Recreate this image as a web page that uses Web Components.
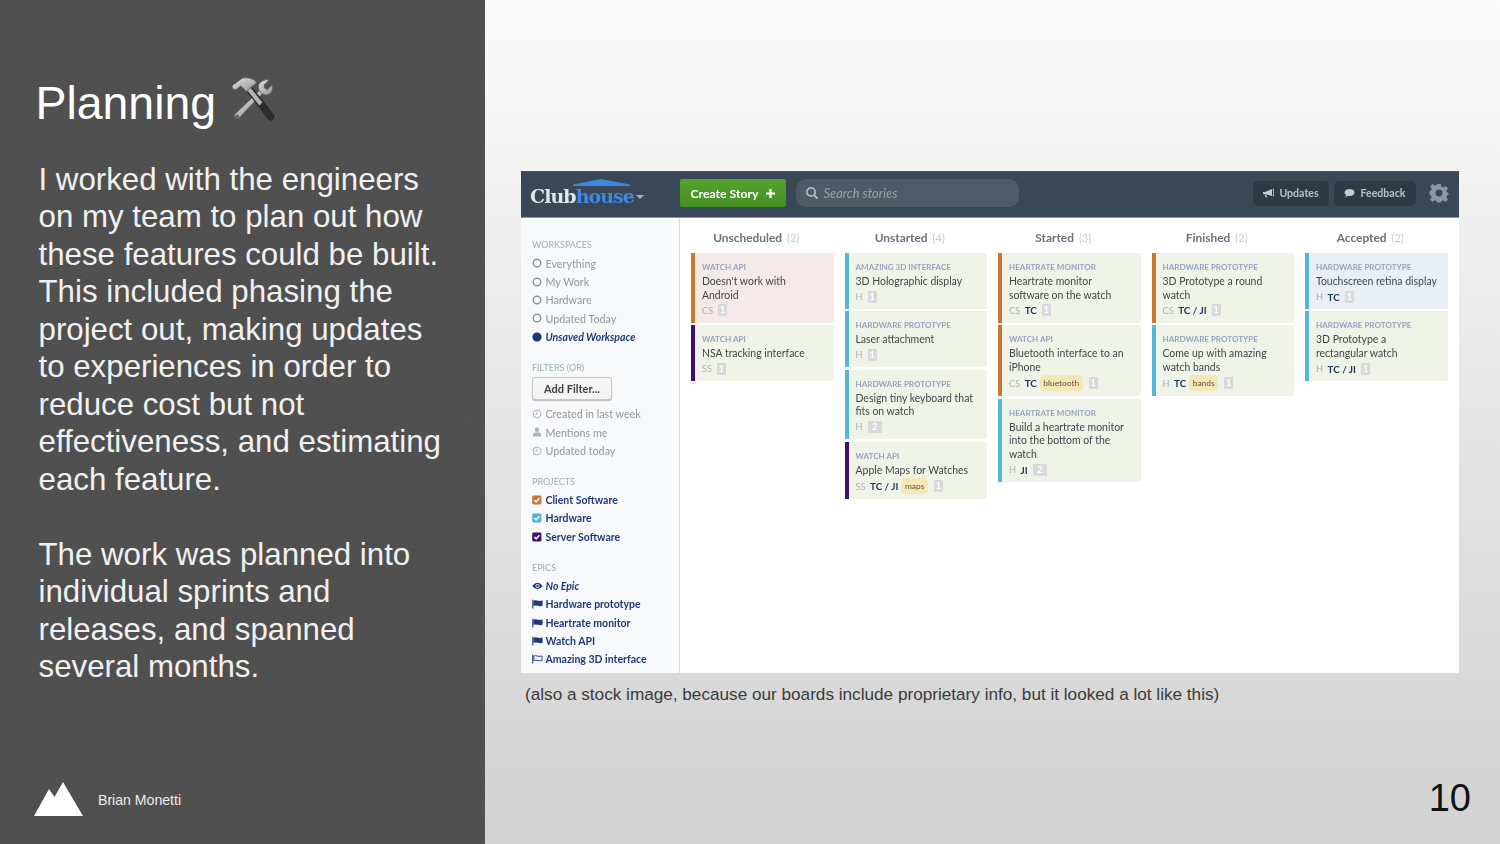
<!DOCTYPE html>
<html><head><meta charset="utf-8"><title>Planning</title>
<style>
html,body{margin:0;padding:0;width:1500px;height:844px;overflow:hidden}
</style></head><body>
<slide-page>
  <slide-aside slot="aside">
    <span slot="title">Planning</span>
    I worked with the engineers<br>on my team to plan out how<br>these features could be built.<br>This included phasing the<br>project out, making updates<br>to experiences in order to<br>reduce cost but not<br>effectiveness, and estimating<br>each feature.<br><br>The work was planned into<br>individual sprints and<br>releases, and spanned<br>several months.
    <span slot="author">Brian Monetti</span>
  </slide-aside>
  <app-window slot="main">
    <app-header slot="header"></app-header>
    <app-sidebar slot="sidebar"></app-sidebar>
    <kanban-col name="Unscheduled" count="2">
      <story-card tone="pink" bar="o" epic="Watch API" team="CS" est="1">Doesn't work with<br>Android</story-card>
      <story-card bar="p" epic="Watch API" team="SS" est="1">NSA tracking interface</story-card>
    </kanban-col>
    <kanban-col name="Unstarted" count="4">
      <story-card bar="b" epic="Amazing 3D interface" team="H" est="1">3D Holographic display</story-card>
      <story-card bar="b" epic="Hardware prototype" team="H" est="1">Laser attachment</story-card>
      <story-card bar="b" epic="Hardware prototype" team="H" est="2">Design tiny keyboard that<br>fits on watch</story-card>
      <story-card bar="p" epic="Watch API" team="SS" who="TC / JI" tag="maps" est="1">Apple Maps for Watches</story-card>
    </kanban-col>
    <kanban-col name="Started" count="3">
      <story-card bar="o" epic="Heartrate monitor" team="CS" who="TC" est="1">Heartrate monitor<br>software on the watch</story-card>
      <story-card bar="o" epic="Watch API" team="CS" who="TC" tag="bluetooth" est="1">Bluetooth interface to an<br>iPhone</story-card>
      <story-card bar="b" epic="Heartrate monitor" team="H" who="JI" est="2">Build a heartrate monitor<br>into the bottom of the<br>watch</story-card>
    </kanban-col>
    <kanban-col name="Finished" count="2">
      <story-card bar="o" epic="Hardware prototype" team="CS" who="TC / JI" est="1">3D Prototype a round<br>watch</story-card>
      <story-card bar="b" epic="Hardware prototype" team="H" who="TC" tag="bands" est="1">Come up with amazing<br>watch bands</story-card>
    </kanban-col>
    <kanban-col name="Accepted" count="2">
      <story-card tone="blue" bar="b" epic="Hardware prototype" team="H" who="TC" est="1">Touchscreen retina display</story-card>
      <story-card bar="b" epic="Hardware prototype" team="H" who="TC / JI" est="1">3D Prototype a<br>rectangular watch</story-card>
    </kanban-col>
  </app-window>
  <span slot="caption">(also a stock image, because our boards include proprietary info, but it looked a lot like this)</span>
  <span slot="page">10</span>
</slide-page>
<script>
function def(name, html, extra){
  customElements.define(name, class extends HTMLElement{
    constructor(){super();this.attachShadow({mode:'open'});}
    connectedCallback(){ this.shadowRoot.innerHTML = typeof html==='function'?html(this):html; if(extra)extra(this); }
  });
}
const I={
 ring:'<svg width="10" height="10" viewBox="0 0 10 10"><circle cx="5" cy="5" r="3.8" fill="none" stroke="#8f9396" stroke-width="1.4"/></svg>',
 dot:'<svg width="10" height="10" viewBox="0 0 10 10"><circle cx="5" cy="5" r="4.6" fill="#1b3581"/></svg>',
 clock:'<svg width="10" height="10" viewBox="0 0 10 10"><circle cx="5" cy="5" r="3.9" fill="none" stroke="#b0b3b6" stroke-width="1"/><path d="M5 2.8V5.3H3.2" fill="none" stroke="#b0b3b6" stroke-width="1"/></svg>',
 user:'<svg width="10" height="10" viewBox="0 0 10 10"><circle cx="5" cy="2.8" r="2.2" fill="#b0b3b6"/><path d="M1 9.5V7.4Q1 5.6 3 5.4H7Q9 5.6 9 7.4V9.5Z" fill="#b0b3b6"/></svg>',
 check:c=>`<svg width="10" height="10" viewBox="0 0 10 10"><rect x=".2" y=".6" width="9.2" height="8.8" rx="1.4" fill="${c}"/><path d="M2.4 5 4.2 6.8 7.4 3.2" fill="none" stroke="#fff" stroke-width="1.5"/></svg>`,
 eye:'<svg width="11" height="10" viewBox="0 0 11 10"><path d="M.3 5Q2.8 1.7 5.5 1.7T10.7 5Q8.2 8.3 5.5 8.3T.3 5Z" fill="#1f3a7a"/><circle cx="5.5" cy="5" r="2" fill="#f8f9fb"/><circle cx="5.5" cy="5" r="1.2" fill="#1f3a7a"/></svg>',
 flag:'<svg width="11" height="10" viewBox="0 0 11 10"><path d="M.8 .8V9.6" stroke="#1f3a7a" stroke-width="1.1"/><path d="M1.4 1.6Q3.2 .8 5 1.6T10.6 1.6V6.8Q8.2 7.6 6 6.8T1.4 6.8Z" fill="#1f3a7a"/></svg>',
 flagO:'<svg width="11" height="10" viewBox="0 0 11 10"><path d="M.8 .8V9.6" stroke="#1f3a7a" stroke-width="1.1"/><path d="M1.8 2Q3.4 1.3 5 2T10.1 2V6.5Q8 7.2 6 6.5T1.8 6.5Z" fill="none" stroke="#1f3a7a" stroke-width=".9"/></svg>'
};

def('slide-page',`<style>
:host{display:flex;width:1500px;height:844px;font-family:"Liberation Sans",Arial,sans-serif}
.l{width:485px;flex:none;display:flex}
.r{flex:1;display:flex;flex-direction:column;padding:171px 41px 0 36px;background:linear-gradient(180deg,#fbfbfb 0,#f0f0f0 25%,#dcdcdc 72%,#d2d2d2 100%);min-width:0}
.cap{font-size:17.16px;line-height:20px;color:#3a3a3a;padding:11px 0 0 4px;height:20px;white-space:nowrap}
.pg{margin-top:auto;text-align:right;font-size:38px;line-height:48px;color:#111;padding:0 0 22px 0;margin-right:-12px}
</style><div class="l"><slot name="aside"></slot></div><div class="r"><slot name="main"></slot><div class="cap"><slot name="caption"></slot></div><div class="pg"><slot name="page"></slot></div></div>`);

def('slide-aside',`<style>
:host{display:flex;flex-direction:column;width:485px;height:844px;box-sizing:border-box;background:#4c4c4c;color:#f4f4f4;position:relative;overflow:hidden}
.noise{position:absolute;inset:0;width:100%;height:100%;opacity:.07;pointer-events:none}
.t{position:relative;display:flex;align-items:center;gap:14px;font-size:46.4px;line-height:56px;color:#fff;padding:75px 0 0 35.5px}
.t svg{margin-top:-7px;flex:none}
.b{position:relative;font-size:31.25px;line-height:37.5px;padding:29.5px 0 0 38.5px;white-space:nowrap;color:#f1f1f1}
.f{position:relative;margin-top:auto;display:flex;align-items:center;gap:15px;padding:0 0 27px 34px;font-size:14.1px;color:#ececec}
</style>
<svg class="noise" aria-hidden="true"><filter id="n"><feTurbulence type="fractalNoise" baseFrequency="1.1 .5" numOctaves="2"/><feColorMatrix type="saturate" values="0"/></filter><rect width="100%" height="100%" filter="url(#n)"/></svg>
<div class="t"><slot name="title"></slot>
<svg width="47" height="47" viewBox="0 0 48 48"><defs><linearGradient id="s" x1="0" y1="0" x2="1" y2="1"><stop offset="0" stop-color="#e6e6e6"/><stop offset="1" stop-color="#8f8f8f"/></linearGradient></defs>
<path d="M5 39 31 14 34 17 9 43A3 3 0 0 1 5 39Z" fill="url(#s)" stroke="#5c5c5c" stroke-width=".8"/><circle cx="7.4" cy="41" r="1.7" fill="#555"/>
<path d="M30 15Q27 8 33 5 37 3 40 4L35 9 35 12 38 14 43 9Q45 14 41 18 37 21 33 18Z" fill="url(#s)" stroke="#5a5a5a" stroke-width=".8"/>
<path d="M17 15 22 11 45 40Q46 43 43 45 40 46 39 44Z" fill="#2c2c2c" stroke="#222" stroke-width=".6"/><path d="M18 15 21 12 33 27 30 30Z" fill="#b5b5b5"/>
<path d="M3 13 2 10 13 2Q19 1 25 4L27 7 22 11 17 16 11 10 6 14Z" fill="url(#s)" stroke="#666" stroke-width=".8"/>
</svg></div>
<div class="b"><slot></slot></div>
<div class="f"><svg width="49" height="35" viewBox="0 0 49 35"><path d="M0 34 15 7 20.5 15 29 0 49 34Z" fill="#fff"/></svg><slot name="author"></slot></div>`);

def('app-window',`<style>
:host{display:grid;grid-template-columns:159px 1fr;grid-template-rows:47px 1fr;width:938px;height:502px;background:#fff;font-family:Lato,"Liberation Sans",sans-serif;filter:blur(.4px);flex:none}
.h{grid-column:1/3}
.s{min-width:0}
.board{display:grid;grid-template-columns:repeat(5,142.5px);column-gap:11px;padding:0 0 0 11px;align-items:start}
</style><div class="h"><slot name="header"></slot></div><div class="s"><slot name="sidebar"></slot></div><div class="board"><slot></slot></div>`);

def('app-header',`<style>
:host{display:flex;align-items:center;height:47px;box-sizing:border-box;background:#3a4757;border-bottom:1px solid #8e98a4;border-top:1px solid #4a5563;font-family:Lato,sans-serif;padding:0 10px 3px 9px}
.logo{position:relative;width:100px;font-family:"DejaVu Serif",serif;font-weight:700;font-size:19px;letter-spacing:-.95px;line-height:22px;color:#dfe6ee;white-space:nowrap;margin-top:6px}
.logo b{color:#3c87e0}
.logo svg{position:absolute;left:43px;top:-6px}
.caret{margin:8px 0 0 6px;width:0;height:0;border:4px solid transparent;border-top:4px solid #a9b2bc;border-bottom:0}
.create{margin-left:36px;width:106px;height:28px;box-sizing:border-box;border-radius:2px;background:linear-gradient(#55a32f,#448f24);color:#fff;font-weight:700;font-size:12.2px;display:flex;align-items:center;justify-content:center;gap:8px}
.search{margin-left:10px;width:223px;height:28px;border-radius:10px;background:#4f5a69;display:flex;align-items:center;gap:4.5px;padding-left:9px;box-sizing:border-box;color:#98a1ac;font-style:italic;font-size:12.85px}
.sp{flex:1}
.pill{height:25px;border-radius:5px;background:#2e3946;color:#b8c0c9;font-size:10.6px;font-weight:700;display:flex;align-items:center;gap:5px;box-sizing:border-box;justify-content:center}
</style>
<div class="logo">Club<b>house</b><svg width="57" height="7" viewBox="0 0 57 7"><path d="M0 5.5 28 0 57 5.5V7H0Z" fill="#3c87e0"/></svg></div><div class="caret"></div>
<div class="create"><span>Create Story</span><svg width="9" height="9" viewBox="0 0 9 9"><path d="M4.5 0V9M0 4.5H9" stroke="#fff" stroke-width="2.2"/></svg></div>
<div class="search"><svg width="14" height="14" viewBox="0 0 14 14"><circle cx="6" cy="6" r="4.2" fill="none" stroke="#b5bcc5" stroke-width="1.7"/><path d="M9 9 12.6 12.6" stroke="#b5bcc5" stroke-width="2"/></svg><span>Search stories</span></div>
<div class="sp"></div>
<div class="pill" style="width:76px"><svg width="11" height="10" viewBox="0 0 11 10"><path d="M0 4H2L9 1V8L2 6H0Z M3 6.5 4.4 9.4H2.8L1.6 6.4Z" fill="#c4cbd3"/><path d="M9.5 1.5 10.5 1V8L9.5 7.5" fill="none" stroke="#c4cbd3" stroke-width=".8"/></svg><span>Updates</span></div>
<div class="pill" style="width:82px;margin-left:5px"><svg width="11" height="10" viewBox="0 0 11 10"><path d="M5.5 1C8.5 1 10.5 2.6 10.5 4.6S8.5 8 5.5 8Q4.7 8 4 7.8L1.3 9.4 2.2 7.1Q.5 6.2.5 4.6C.5 2.6 2.5 1 5.5 1Z" fill="#c4cbd3"/></svg><span>Feedback</span></div>
<svg style="margin:0 0 0 13px" width="20" height="20" viewBox="0 0 22 22"><path fill="#8d97a3" fill-rule="evenodd" d="M9 1H13L13.6 4 15.8 4.9 18.3 3.2 21 5.9 19.1 8.4 20 10.5 21.5 11 21.5 13 20 13.6 19 15.7 20.8 18.2 18.2 20.8 15.7 19 13.6 20 13 21.5H9L8.4 19.9 6.3 19 3.8 20.8 1.2 18.2 3 15.7 2 13.6.5 13V9L2 8.4 3 6.3 1.2 3.8 3.8 1.2 6.3 3 8.4 2.1ZM11 7.2A3.8 3.8 0 1 0 11 14.8 3.8 3.8 0 1 0 11 7.2Z"/></svg>`);

def('side-group', h=>`<style>
:host{display:block;margin-bottom:16px}
.l{font-size:9px;line-height:12px;color:#9db0ae;text-transform:uppercase;margin-bottom:3px}
</style><div class="l">${h.getAttribute('label')}</div><slot></slot>`);

def('side-item', h=>{
  const ic=h.getAttribute('i');
  const icon=ic.startsWith('#')?I.check(ic):I[ic];
  return `<style>
:host{display:flex;align-items:center;height:18.35px;gap:3.5px;font-size:10.5px;white-space:nowrap;color:#1f3a7a;font-weight:700}
:host([m]){color:#9a9d9f;font-weight:500;font-size:10.7px}
:host([em]){font-style:italic}
span{display:flex;width:10px;flex:none}
svg{flex:none}
</style><span>${icon}</span><slot></slot>`;
});

def('app-sidebar',`<style>
:host{display:block;height:455px;box-sizing:border-box;background:#f8f9fb;border-right:1px solid #dadcdf;padding:21px 0 0 11px;overflow:hidden}
.btn{width:80px;height:23px;box-sizing:border-box;border:1px solid #c4c6c8;border-radius:3px;background:#f5f5f5;box-shadow:0 1px 1px #bbb;color:#3e4348;font-size:11px;font-weight:700;display:flex;align-items:center;justify-content:center;margin:3px 0 5px}
</style>
<side-group label="Workspaces"><side-item m i="ring">Everything</side-item><side-item m i="ring">My Work</side-item><side-item m i="ring">Hardware</side-item><side-item m i="ring">Updated Today</side-item><side-item em i="dot">Unsaved Workspace</side-item></side-group>
<side-group label="Filters (OR)"><div class="btn">Add Filter...</div><side-item m i="clock">Created in last week</side-item><side-item m i="user">Mentions me</side-item><side-item m i="clock">Updated today</side-item></side-group>
<side-group label="Projects"><side-item i="#c9762f">Client Software</side-item><side-item i="#4fb0d8">Hardware</side-item><side-item i="#3c0f73">Server Software</side-item></side-group>
<side-group label="Epics"><side-item em i="eye">No Epic</side-item><side-item i="flag">Hardware prototype</side-item><side-item i="flag">Heartrate monitor</side-item><side-item i="flag">Watch API</side-item><side-item i="flagO">Amazing 3D interface</side-item></side-group>`);

def('kanban-col', h=>`<style>
:host{display:block}
.h{height:35px;display:flex;align-items:center;justify-content:center;gap:5px;font-size:11.9px;font-weight:700;color:#6d7276;padding:3px 12px 0 0;box-sizing:border-box}
.h i{font-style:normal;font-weight:400;color:#c9cbcd;font-size:11px}
.c{display:flex;flex-direction:column;gap:2.3px}
</style><div class="h"><span>${h.getAttribute('name')}</span><i>(${h.getAttribute('count')})</i></div><div class="c"><slot></slot></div>`);

def('story-card', h=>{
  const a=k=>h.getAttribute(k);
  const bars={o:'#c9762f',p:'#3f0f75',b:'#56b5da'};
  const bg={pink:'#f6e9e9',blue:'#e9eff4'}[a('tone')]||'#f0f4e8';
  return `<style>
:host{display:block;box-sizing:border-box;background:${bg};border-left:4px solid ${bars[a('bar')]};padding:8px 6px 5.3px 7px}
.e{font-size:8.05px;line-height:12.6px;color:#98a3c2;font-weight:700;text-transform:uppercase;white-space:nowrap}
.t{font-size:10.45px;line-height:13.7px;color:#41464a;white-space:nowrap;margin-top:1.4px}
.m{display:flex;align-items:center;min-height:14px;font-size:9.2px;color:#aeb1b2;margin-top:1px}
.w{margin-left:4.5px;color:#1d3557;font-weight:700;font-size:9.9px}
.g{margin-left:3px;background:#f6e7b6;border-radius:4px;color:#5c5538;font-size:8.4px;line-height:12px;padding:2px 3.5px 1.7px}
.n{margin-left:5px;background:#d9dadb;color:#fff;font-size:9px;font-weight:700;line-height:12px;min-width:9px;text-align:center}
.n.wide{min-width:14px}
.g + .n{margin-left:6px}
</style><div class="e">${a('epic')}</div><div class="t"><slot></slot></div><div class="m"><span>${a('team')}</span>${a('who')?`<span class="w">${a('who')}</span>`:''}${a('tag')?`<span class="g">${a('tag')}</span>`:''}<span class="n${a('est')==='2'?' wide':''}">${a('est')}</span></div>`;
});
</script>
</body></html>
